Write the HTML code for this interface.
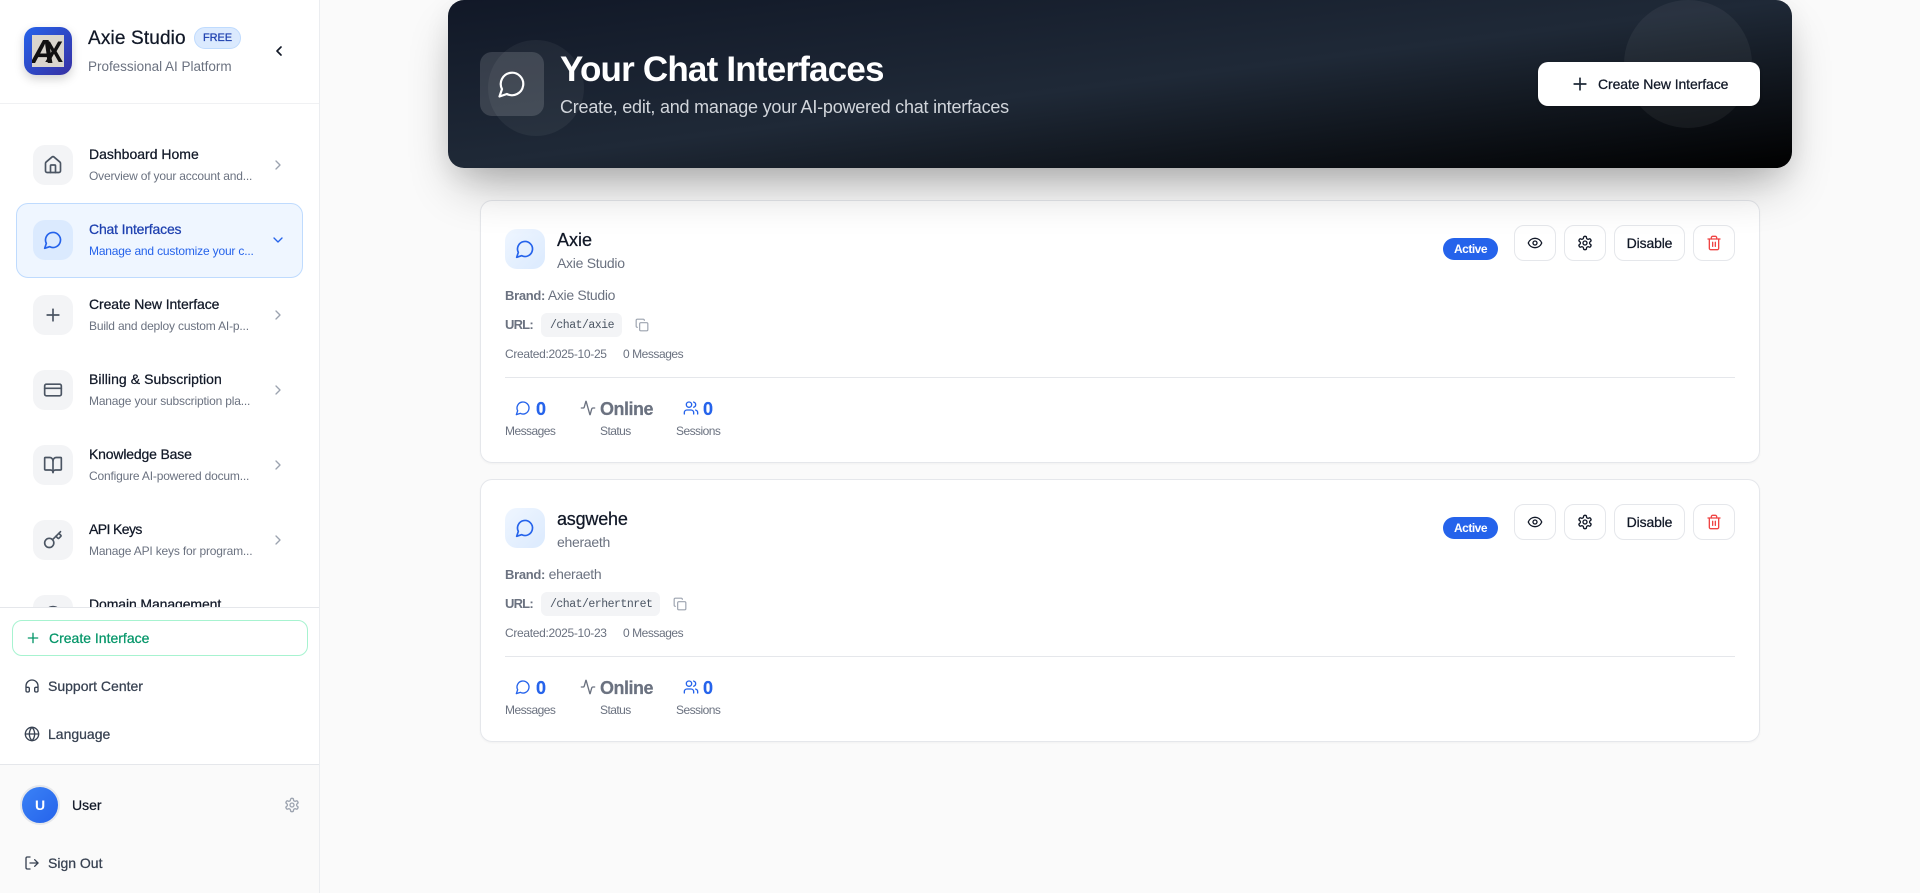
<!DOCTYPE html>
<html lang="en"><head><meta charset="utf-8"><title>Axie Studio</title>
<style>
*{box-sizing:border-box;margin:0;padding:0}
html,body{width:1920px;height:893px;overflow:hidden;background:#fafafa;font-family:"Liberation Sans",Arial,sans-serif;color:#111827}
.t{position:absolute;white-space:nowrap;line-height:20px;height:20px}
.m{-webkit-text-stroke:.25px currentColor}
svg.i{position:absolute;fill:none;stroke:currentColor;stroke-width:2;stroke-linecap:round;stroke-linejoin:round}
#side{position:absolute;left:0;top:0;width:320px;height:893px;background:#fff;border-right:1px solid #ebedf0;overflow:hidden}
#hline{position:absolute;left:0;top:103px;width:319px;height:1px;background:#f0f1f3}
.box{position:absolute;left:33px;width:40px;height:40px;border-radius:12px;background:#f3f4f6;color:#4b5563}
.box svg{left:10px;top:10px;width:20px;height:20px}
.ti{left:89px;font-size:14px;color:#111827;letter-spacing:-.1px}
.su{left:89px;font-size:12px;color:#6b7280;letter-spacing:-.18px}
.ch{left:270px;width:16px;height:16px;color:#9ca3af}
#active{position:absolute;left:16px;top:203px;width:287px;height:75px;background:#eff6ff;border:1px solid #bfdbfe;border-radius:12px}
#bot{position:absolute;left:0;top:607px;width:320px;height:286px;background:#fff;border-top:1px solid #e5e7eb}
#usr{position:absolute;left:0;top:764px;width:320px;height:129px;background:#fafafa;border-top:1px solid #e5e7eb}
#card1,#card2{position:absolute;left:480px;width:1280px;height:263px;background:#fff;border-radius:12px;box-shadow:inset 0 0 0 1px #e5e7eb,0 1px 2px rgba(0,0,0,.04);z-index:1}
#card1{top:200px}#card2{top:479px}
.ib{position:absolute;left:25px;top:29px;width:40px;height:40px;border-radius:12px;background:linear-gradient(135deg,#eff6ff,#dbeafe);color:#2563eb}
.ib svg{left:10px;top:10px;width:20px;height:20px}
.btn{position:absolute;top:25px;height:36px;border:1px solid #e5e7eb;border-radius:10px;background:#fff;color:#111827}
.btn svg{left:12px;top:9px;width:16px;height:16px}
.pill{position:absolute;left:963px;top:38px;width:55px;height:22px;border-radius:11px;background:#2563eb;color:#fff;font-size:12px;font-weight:700;line-height:22px;text-align:center;letter-spacing:-.5px}
.code{position:absolute;left:61px;top:113px;height:24px;border-radius:6px;background:#f3f4f6;color:#4b5563;font:11.5px/25px "Liberation Mono",monospace;letter-spacing:-.5px;padding-left:9px}
.g{color:#6b7280}
.b13{font-size:13px;font-weight:700;letter-spacing:-.3px}
.cr{font-size:12px;letter-spacing:-.32px}
.la{font-size:12px;letter-spacing:-.55px}
.num{font-size:18px;font-weight:700;color:#2563eb;-webkit-text-stroke:.2px currentColor}
#hero{position:absolute;left:448px;top:0;width:1344px;height:168px;border-radius:16px;background:linear-gradient(to bottom right,#111827 0%,#1f2937 50%,#000 100%);box-shadow:0 25px 50px -12px rgba(0,0,0,.32),0 8px 26px rgba(0,0,0,.07);z-index:2}
.circ{position:absolute;border-radius:50%;background:rgba(255,255,255,.05)}
</style></head><body>
<svg width="0" height="0" style="position:absolute">
<symbol id="home" viewBox="0 0 24 24"><path d="M15 21v-8a1 1 0 0 0-1-1h-4a1 1 0 0 0-1 1v8"/><path d="M3 10a2 2 0 0 1 .709-1.528l7-5.999a2 2 0 0 1 2.582 0l7 5.999A2 2 0 0 1 21 10v9a2 2 0 0 1-2 2H5a2 2 0 0 1-2-2z"/></symbol>
<symbol id="msg" viewBox="0 0 24 24"><path d="M7.9 20A9 9 0 1 0 4 16.1L2 22Z"/></symbol>
<symbol id="plus" viewBox="0 0 24 24"><path d="M5 12h14"/><path d="M12 5v14"/></symbol>
<symbol id="ccard" viewBox="0 0 24 24"><rect width="20" height="14" x="2" y="5" rx="2"/><line x1="2" x2="22" y1="10" y2="10"/></symbol>
<symbol id="book" viewBox="0 0 24 24"><path d="M12 7v14"/><path d="M3 18a1 1 0 0 1-1-1V4a1 1 0 0 1 1-1h5a4 4 0 0 1 4 4 4 4 0 0 1 4-4h5a1 1 0 0 1 1 1v13a1 1 0 0 1-1 1h-6a3 3 0 0 0-3 3 3 3 0 0 0-3-3z"/></symbol>
<symbol id="key" viewBox="0 0 24 24"><path d="m15.5 7.5 2.3 2.3a1 1 0 0 0 1.4 0l2.1-2.1a1 1 0 0 0 0-1.4L19 4"/><path d="m21 2-9.6 9.6"/><circle cx="7.5" cy="15.5" r="5.5"/></symbol>
<symbol id="globe" viewBox="0 0 24 24"><circle cx="12" cy="12" r="10"/><path d="M12 2a14.5 14.5 0 0 0 0 20 14.5 14.5 0 0 0 0-20"/><path d="M2 12h20"/></symbol>
<symbol id="phones" viewBox="0 0 24 24"><path d="M3 14h3a2 2 0 0 1 2 2v3a2 2 0 0 1-2 2H5a2 2 0 0 1-2-2v-7a9 9 0 0 1 18 0v7a2 2 0 0 1-2 2h-1a2 2 0 0 1-2-2v-3a2 2 0 0 1 2-2h3"/></symbol>
<symbol id="gear" viewBox="0 0 24 24"><path d="M12.22 2h-.44a2 2 0 0 0-2 2v.18a2 2 0 0 1-1 1.73l-.43.25a2 2 0 0 1-2 0l-.15-.08a2 2 0 0 0-2.73.73l-.22.38a2 2 0 0 0 .73 2.73l.15.1a2 2 0 0 1 1 1.72v.51a2 2 0 0 1-1 1.74l-.15.09a2 2 0 0 0-.73 2.73l.22.38a2 2 0 0 0 2.73.73l.15-.08a2 2 0 0 1 2 0l.43.25a2 2 0 0 1 1 1.73V20a2 2 0 0 0 2 2h.44a2 2 0 0 0 2-2v-.18a2 2 0 0 1 1-1.73l.43-.25a2 2 0 0 1 2 0l.15.08a2 2 0 0 0 2.73-.73l.22-.39a2 2 0 0 0-.73-2.73l-.15-.08a2 2 0 0 1-1-1.74v-.5a2 2 0 0 1 1-1.74l.15-.09a2 2 0 0 0 .73-2.73l-.22-.38a2 2 0 0 0-2.73-.73l-.15.08a2 2 0 0 1-2 0l-.43-.25a2 2 0 0 1-1-1.73V4a2 2 0 0 0-2-2z"/><circle cx="12" cy="12" r="3"/></symbol>
<symbol id="out" viewBox="0 0 24 24"><path d="M9 21H5a2 2 0 0 1-2-2V5a2 2 0 0 1 2-2h4"/><polyline points="16 17 21 12 16 7"/><line x1="21" x2="9" y1="12" y2="12"/></symbol>
<symbol id="eye" viewBox="0 0 24 24"><path d="M2.062 12.348a1 1 0 0 1 0-.696 10.75 10.75 0 0 1 19.876 0 1 1 0 0 1 0 .696 10.75 10.75 0 0 1-19.876 0"/><circle cx="12" cy="12" r="3"/></symbol>
<symbol id="trash" viewBox="0 0 24 24"><path d="M3 6h18"/><path d="M19 6v14c0 1-1 2-2 2H7c-1 0-2-1-2-2V6"/><path d="M8 6V4c0-1 1-2 2-2h4c1 0 2 1 2 2v2"/><line x1="10" x2="10" y1="11" y2="17"/><line x1="14" x2="14" y1="11" y2="17"/></symbol>
<symbol id="copy" viewBox="0 0 24 24"><rect width="14" height="14" x="8" y="8" rx="2"/><path d="M4 16c-1.1 0-2-.9-2-2V4c0-1.1.9-2 2-2h10c1.1 0 2 .9 2 2"/></symbol>
<symbol id="act" viewBox="0 0 24 24"><path d="M22 12h-2.48a2 2 0 0 0-1.93 1.46l-2.35 8.36a.25.25 0 0 1-.48 0L9.24 2.18a.25.25 0 0 0-.48 0l-2.35 8.36A2 2 0 0 1 4.49 12H2"/></symbol>
<symbol id="users" viewBox="0 0 24 24"><path d="M16 21v-2a4 4 0 0 0-4-4H6a4 4 0 0 0-4 4v2"/><circle cx="9" cy="7" r="4"/><path d="M22 21v-2a4 4 0 0 0-3-3.87"/><path d="M16 3.13a4 4 0 0 1 0 7.75"/></symbol>
<symbol id="cr" viewBox="0 0 24 24"><path d="m9 18 6-6-6-6"/></symbol>
<symbol id="cl" viewBox="0 0 24 24"><path d="m15 18-6-6 6-6"/></symbol>
<symbol id="cd" viewBox="0 0 24 24"><path d="m6 9 6 6 6-6"/></symbol>
</svg>

<div id="side">
  <div style="position:absolute;left:24px;top:27px;width:48px;height:48px;border-radius:12px;background:linear-gradient(135deg,#2563eb,#3730a3);box-shadow:0 4px 10px rgba(0,0,0,.18)"></div>
  <svg style="position:absolute;left:32px;top:35px" width="32" height="32" viewBox="0 0 32 32"><rect width="32" height="32" fill="#d9d5cd"/><text x="-1" y="28" font-family="Liberation Sans" font-weight="700" font-style="italic" font-size="33" fill="#111">A</text><text x="13" y="27" font-family="Liberation Sans" font-weight="700" font-size="30" textLength="18" lengthAdjust="spacingAndGlyphs" fill="#111">X</text></svg>
  <div class="t m" style="left:88px;top:29px;font-size:19px;color:#111827;letter-spacing:.15px">Axie Studio</div>
  <div style="position:absolute;left:194px;top:27px;width:47px;height:22px;border-radius:11px;background:#dbeafe;border:1px solid #bfdbfe;color:#1e40af;font-size:11px;line-height:20px;text-align:center;letter-spacing:-.1px" class="m">FREE</div>
  <div class="t g" style="left:88px;top:57px;font-size:13.5px;letter-spacing:-.02px">Professional AI Platform</div>
  <svg class="i" style="left:271px;top:43px;width:16px;height:16px;color:#111827;stroke-width:2.5"><use href="#cl"/></svg>
  <div id="hline"></div>

  <div id="active"></div>

  <div class="box" style="top:145px"><svg class="i"><use href="#home"/></svg></div>
  <div class="t ti m" style="top:144px;letter-spacing:0">Dashboard Home</div>
  <div class="t su" style="top:166px">Overview of your account and...</div>
  <svg class="i ch" style="top:157px"><use href="#cr"/></svg>

  <div class="box" style="top:220px;background:#dbeafe;color:#2563eb"><svg class="i"><use href="#msg"/></svg></div>
  <div class="t ti m" style="top:219px;color:#1e40af;letter-spacing:-.17px">Chat Interfaces</div>
  <div class="t su" style="top:241px;color:#2563eb">Manage and customize your c...</div>
  <svg class="i ch" style="top:232px;color:#2563eb"><use href="#cd"/></svg>

  <div class="box" style="top:295px"><svg class="i"><use href="#plus"/></svg></div>
  <div class="t ti m" style="top:294px">Create New Interface</div>
  <div class="t su" style="top:316px">Build and deploy custom AI-p...</div>
  <svg class="i ch" style="top:307px"><use href="#cr"/></svg>

  <div class="box" style="top:370px"><svg class="i"><use href="#ccard"/></svg></div>
  <div class="t ti m" style="top:369px;letter-spacing:.06px">Billing &amp; Subscription</div>
  <div class="t su" style="top:391px">Manage your subscription pla...</div>
  <svg class="i ch" style="top:382px"><use href="#cr"/></svg>

  <div class="box" style="top:445px"><svg class="i"><use href="#book"/></svg></div>
  <div class="t ti m" style="top:444px;letter-spacing:-.17px">Knowledge Base</div>
  <div class="t su" style="top:466px">Configure AI-powered docum...</div>
  <svg class="i ch" style="top:457px"><use href="#cr"/></svg>

  <div class="box" style="top:520px"><svg class="i"><use href="#key"/></svg></div>
  <div class="t ti m" style="top:519px;letter-spacing:-.6px">API Keys</div>
  <div class="t su" style="top:541px">Manage API keys for program...</div>
  <svg class="i ch" style="top:532px"><use href="#cr"/></svg>

  <div class="box" style="top:595px"><svg class="i"><use href="#globe"/></svg></div>
  <div class="t ti m" style="top:594px">Domain Management</div>

  <div id="bot"></div>
  <div style="position:absolute;left:12px;top:620px;width:296px;height:36px;border:1px solid #a7f3d0;border-radius:10px;background:#fff"></div>
  <svg class="i" style="left:25px;top:630px;width:16px;height:16px;color:#059669"><use href="#plus"/></svg>
  <div class="t m" style="left:49px;top:628px;font-size:14px;color:#059669">Create Interface</div>
  <svg class="i" style="left:24px;top:678px;width:16px;height:16px;color:#374151"><use href="#phones"/></svg>
  <div class="t m" style="left:48px;top:676px;font-size:14px;color:#374151">Support Center</div>
  <svg class="i" style="left:24px;top:726px;width:16px;height:16px;color:#374151"><use href="#globe"/></svg>
  <div class="t m" style="left:48px;top:724px;font-size:14px;color:#374151">Language</div>
  <div id="usr"></div>
  <div style="position:absolute;left:20px;top:785px;width:40px;height:40px;border-radius:50%;background:linear-gradient(135deg,#3b82f6,#2563eb);border:2px solid #e5e7eb;color:#fff;font-size:14px;font-weight:700;line-height:36px;text-align:center">U</div>
  <div class="t m" style="left:72px;top:795px;font-size:14px;color:#111827">User</div>
  <svg class="i" style="left:284px;top:797px;width:16px;height:16px;color:#9ca3af"><use href="#gear"/></svg>
  <svg class="i" style="left:24px;top:855px;width:16px;height:16px;color:#374151"><use href="#out"/></svg>
  <div class="t m" style="left:48px;top:853px;font-size:14px;color:#374151">Sign Out</div>
</div>

<div id="hero">
  <div class="circ" style="left:40px;top:40px;width:96px;height:96px"></div>
  <div class="circ" style="left:1176px;top:0;width:128px;height:128px"></div>
  <div style="position:absolute;left:32px;top:52px;width:64px;height:64px;border-radius:12px;background:rgba(255,255,255,.14);color:#fff"><svg class="i" style="left:17px;top:17px;width:30px;height:30px;stroke-width:1.75"><use href="#msg"/></svg></div>
  <div class="t" style="left:112px;top:50px;height:40px;line-height:40px;font-size:35px;font-weight:700;color:#fff;letter-spacing:-.8px">Your Chat Interfaces</div>
  <div class="t" style="left:112px;top:96px;height:22px;line-height:22px;font-size:18px;color:#d1d5db;letter-spacing:-.22px">Create, edit, and manage your AI-powered chat interfaces</div>
  <div style="position:absolute;left:1090px;top:62px;width:222px;height:44px;border-radius:10px;background:#fff;box-shadow:0 1px 3px rgba(0,0,0,.2)"></div>
  <svg class="i" style="left:1122px;top:74px;width:20px;height:20px;color:#1f2937"><use href="#plus"/></svg>
  <div class="t m" style="left:1150px;top:74px;font-size:14px;color:#111827;letter-spacing:-.1px">Create New Interface</div>
</div>

<div id="card1">
  <div class="ib"><svg class="i"><use href="#msg"/></svg></div>
  <div class="t m" style="left:77px;top:30px;font-size:18px;color:#111827">Axie</div>
  <div class="t g" style="left:77px;top:53px;font-size:14px;letter-spacing:-.28px">Axie Studio</div>
  <div class="t g" style="left:25px;top:85px;font-size:14px;letter-spacing:-.33px"><span class="b13">Brand:</span> Axie Studio</div>
  <div class="t g" style="left:25px;top:115px;font-size:13px;font-weight:700;letter-spacing:-.8px">URL:</div>
  <div class="code" style="width:81px">/chat/axie</div>
  <svg class="i" style="left:155px;top:118px;width:14px;height:14px;color:#9ca3af"><use href="#copy"/></svg>
  <div class="t g cr" style="left:25px;top:144px">Created:2025-10-25</div>
  <div class="t g cr" style="left:143px;top:144px;letter-spacing:-.45px">0 Messages</div>
  <div style="position:absolute;left:25px;top:177px;width:1230px;height:1px;background:#e5e7eb"></div>
  <svg class="i" style="left:35px;top:200px;width:16px;height:16px;color:#2563eb"><use href="#msg"/></svg>
  <div class="t num" style="left:56px;top:199px">0</div>
  <div class="t g la" style="left:25px;top:221px">Messages</div>
  <svg class="i" style="left:100px;top:200px;width:16px;height:16px;color:#6b7280"><use href="#act"/></svg>
  <div class="t num" style="left:120px;top:199px;color:#6b7280;letter-spacing:-.5px">Online</div>
  <div class="t g la" style="left:120px;top:221px">Status</div>
  <svg class="i" style="left:203px;top:200px;width:16px;height:16px;color:#2563eb"><use href="#users"/></svg>
  <div class="t num" style="left:223px;top:199px">0</div>
  <div class="t g la" style="left:196px;top:221px">Sessions</div>
  <div class="pill">Active</div>
  <div class="btn" style="left:1034px;width:42px"><svg class="i"><use href="#eye"/></svg></div>
  <div class="btn" style="left:1084px;width:42px"><svg class="i"><use href="#gear"/></svg></div>
  <div class="btn m" style="left:1134px;width:71px;font-size:14px;line-height:34px;text-align:center;letter-spacing:-.15px">Disable</div>
  <div class="btn" style="left:1213px;width:42px;color:#ef4444"><svg class="i"><use href="#trash"/></svg></div>
</div>

<div id="card2">
  <div class="ib"><svg class="i"><use href="#msg"/></svg></div>
  <div class="t m" style="left:77px;top:30px;font-size:18px;color:#111827;letter-spacing:-.2px">asgwehe</div>
  <div class="t g" style="left:77px;top:53px;font-size:14px;letter-spacing:-.28px">eheraeth</div>
  <div class="t g" style="left:25px;top:85px;font-size:14px;letter-spacing:-.33px"><span class="b13">Brand:</span> eheraeth</div>
  <div class="t g" style="left:25px;top:115px;font-size:13px;font-weight:700;letter-spacing:-.8px">URL:</div>
  <div class="code" style="width:119px">/chat/erhertnret</div>
  <svg class="i" style="left:193px;top:118px;width:14px;height:14px;color:#9ca3af"><use href="#copy"/></svg>
  <div class="t g cr" style="left:25px;top:144px">Created:2025-10-23</div>
  <div class="t g cr" style="left:143px;top:144px;letter-spacing:-.45px">0 Messages</div>
  <div style="position:absolute;left:25px;top:177px;width:1230px;height:1px;background:#e5e7eb"></div>
  <svg class="i" style="left:35px;top:200px;width:16px;height:16px;color:#2563eb"><use href="#msg"/></svg>
  <div class="t num" style="left:56px;top:199px">0</div>
  <div class="t g la" style="left:25px;top:221px">Messages</div>
  <svg class="i" style="left:100px;top:200px;width:16px;height:16px;color:#6b7280"><use href="#act"/></svg>
  <div class="t num" style="left:120px;top:199px;color:#6b7280;letter-spacing:-.5px">Online</div>
  <div class="t g la" style="left:120px;top:221px">Status</div>
  <svg class="i" style="left:203px;top:200px;width:16px;height:16px;color:#2563eb"><use href="#users"/></svg>
  <div class="t num" style="left:223px;top:199px">0</div>
  <div class="t g la" style="left:196px;top:221px">Sessions</div>
  <div class="pill">Active</div>
  <div class="btn" style="left:1034px;width:42px"><svg class="i"><use href="#eye"/></svg></div>
  <div class="btn" style="left:1084px;width:42px"><svg class="i"><use href="#gear"/></svg></div>
  <div class="btn m" style="left:1134px;width:71px;font-size:14px;line-height:34px;text-align:center;letter-spacing:-.15px">Disable</div>
  <div class="btn" style="left:1213px;width:42px;color:#ef4444"><svg class="i"><use href="#trash"/></svg></div>
</div>
</body></html>
